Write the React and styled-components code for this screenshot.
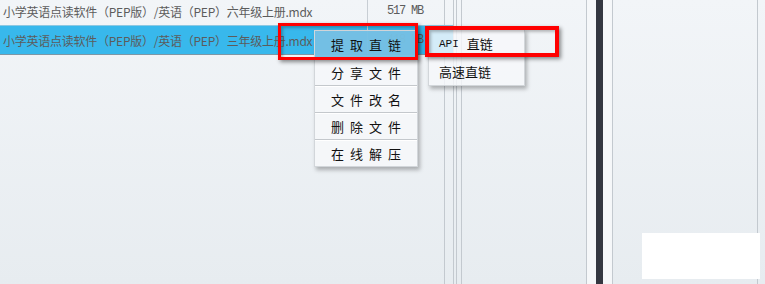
import React from "react";
import styled, { createGlobalStyle } from "styled-components";

const Global = createGlobalStyle`
  html, body { margin: 0; padding: 0; }
  body {
    width: 765px; height: 284px; overflow: hidden;
    background: linear-gradient(to bottom, #f2f5f8 0%, #e7ecf0 100%);
    font-family: "Noto Sans CJK SC", "Noto Sans", sans-serif;
  }
`;

const Page = styled.div`
  position: relative;
  width: 765px;
  height: 284px;
  display: flex;
  overflow: hidden;
`;

const ListPanel = styled.div`
  width: 453px;
  flex: none;
  border-right: 1px solid #c3c9cf;
  background: linear-gradient(to right, transparent 444px, #c3c9cf 444px, #c3c9cf 445px, transparent 445px);
`;

const Row = styled.div`
  display: flex;
  height: 28px;
  align-items: center;
  margin-top: ${(p) => (p.$first ? "-3px" : "0")};
  background: ${(p) => (p.$selected ? "#38b8ec" : "transparent")};
  border-top: ${(p) => (p.$selected ? "1px solid #8cc8e2" : "none")};
  border-bottom: ${(p) => (p.$selected ? "1px solid #7d97a6" : "none")};
`;

const NameCell = styled.div`
  width: 368px;
  height: 100%;
  display: flex;
  align-items: center;
  padding-left: 3px;
  box-sizing: border-box;
  border-right: 1px solid #c8ced4;
  font-size: 12px;
  letter-spacing: -0.25px;
  color: #5c5c5c;
  white-space: nowrap;
  overflow: hidden;
`;

const SizeCell = styled.div`
  width: 76px;
  height: 100%;
  display: flex;
  align-items: center;
  padding-left: 19px;
  box-sizing: border-box;
  font-family: "Liberation Mono", monospace;
  font-size: 12px;
  letter-spacing: -1.2px;
  color: #5c5c5c;
`;

const Gap = styled.div`
  width: ${(p) => p.$w}px;
  flex: none;
  border-right: ${(p) => (p.$noRule ? "none" : "1px solid #c3c9cf")};
  background: ${(p) => p.$bg || "transparent"};
`;

const Panel = styled.div`
  width: ${(p) => p.$w}px;
  flex: none;
  border-right: 1px solid #c3c9cf;
`;

const DarkBar = styled.div`
  width: 7px;
  flex: none;
  background: #343741;
`;

const Menu = styled.div`
  position: absolute;
  left: ${(p) => p.$x}px;
  top: ${(p) => p.$y}px;
  width: ${(p) => p.$w}px;
  background: rgba(246, 248, 250, 0.82);
  border: 1px solid #d2d6da;
  box-shadow: 2px 3px 4px rgba(0, 0, 0, 0.28);
  display: flex;
  flex-direction: column;
`;

const MenuItem = styled.div`
  height: ${(p) => p.$h || 27}px;
  display: flex;
  align-items: center;
  justify-content: ${(p) => (p.$center ? "center" : "flex-start")};
  padding-left: ${(p) => (p.$center ? 0 : 10)}px;
  font-size: 13px;
  color: #111;
  letter-spacing: ${(p) => (p.$center ? "6px" : "0")};
  text-indent: ${(p) => (p.$center ? "6px" : "0")};
  background: ${(p) => (p.$active ? "rgba(90, 180, 222, 0.8)" : "transparent")};
  border-top: ${(p) => (p.$sep ? "1px solid #c4c8cc" : "none")};
  box-shadow: ${(p) => (p.$sep ? "inset 0 1px 0 #ffffff" : "none")};
  box-sizing: border-box;
`;

const Api = styled.span`
  font-family: "Liberation Mono", monospace;
  font-size: 11px;
  margin-right: 8px;
`;

const RedBox = styled.div`
  position: absolute;
  left: ${(p) => p.$x}px;
  top: ${(p) => p.$y}px;
  width: ${(p) => p.$w}px;
  height: ${(p) => p.$h}px;
  border: ${(p) => p.$b}px solid #ff0000;
  box-sizing: border-box;
  box-shadow: 2px 2px 4px rgba(0, 0, 0, 0.45), inset 2px 2px 3px rgba(0, 0, 0, 0.25);
`;

const WhitePatch = styled.div`
  position: absolute;
  left: 642px;
  top: 233px;
  width: 118px;
  height: 46px;
  background: #ffffff;
`;

const files = [
  { name: "小学英语点读软件（PEP版）/英语（PEP）六年级上册.mdx", size: "517 MB" },
  { name: "小学英语点读软件（PEP版）/英语（PEP）三年级上册.mdx", size: "418 MB", selected: true },
];

const menuItems = ["提取直链", "分享文件", "文件改名", "删除文件", "在线解压"];

export default function App() {
  return (
    <>
      <Global />
      <Page>
        <ListPanel>
          {files.map((f, i) => (
            <Row key={i} $first={i === 0} $selected={f.selected}>
              <NameCell>{f.name}</NameCell>
              <SizeCell>{f.size}</SizeCell>
            </Row>
          ))}
        </ListPanel>
        <Gap $w={2} />
        <Gap $w={4} />
        <Panel $w={124} />
        <Gap $w={9} $bg="#f5f7f9" $noRule />
        <DarkBar />
        <Gap $w={9} $bg="#f5f7f9" />
        <Panel $w={144} />

        <Menu $x={314} $y={30} $w={102}>
          {menuItems.map((m, i) => (
            <MenuItem key={m} $center $active={i === 0} $sep={i > 0}>
              {m}
            </MenuItem>
          ))}
        </Menu>
        <Menu $x={428} $y={29} $w={95}>
          <MenuItem>
            <Api>API</Api>直链
          </MenuItem>
          <MenuItem $h={28}>高速直链</MenuItem>
        </Menu>

        <RedBox $x={278} $y={23} $w={140} $h={37} $b={3} />
        <RedBox $x={425} $y={26} $w={134} $h={31} $b={4} />
        <WhitePatch />
      </Page>
    </>
  );
}
